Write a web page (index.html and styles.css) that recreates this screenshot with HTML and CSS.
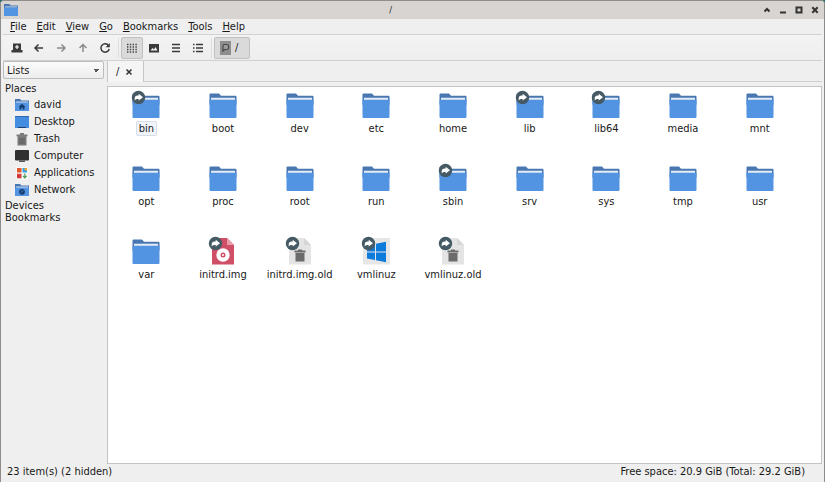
FILE: index.html
```html
<!DOCTYPE html>
<html lang="en">
<head>
<meta charset="utf-8">
<title>/</title>
<link rel="stylesheet" href="styles.css">
</head>
<body>
<svg class="defs" aria-hidden="true">
  <defs>
    <symbol id="folder" viewBox="0 0 30 30">
      <path d="M1.500 4.500q0-1 1-1h8.500l2 2.300h14.500q1 0 1 1v8h-27z" fill="#4877b1"/>
      <path d="M3 7.800h24v4H3z" fill="#e6edf5"/>
      <path d="M1.500 9.800h27v17.200q0 1-1 1h-25q-1 0-1-1z" fill="#5294e2"/>
    </symbol>
    <symbol id="link" viewBox="0 0 30 30">
      <circle cx="7.500" cy="7.500" r="6.700" fill="#455a64"/>
      <path d="M3.700 10.500V8.500Q3.700 5.600 6.700 5.600H7.700V3.800L12 7.300 7.700 10.500V9H6Q4.500 9 3.700 10.500z" fill="#fff"/>
    </symbol>
    <symbol id="disc" viewBox="0 0 30 30">
      <path d="M4 2h15l7 7v19.500H4z" fill="#cf5066"/>
      <path d="M19 2l7 7h-7z" fill="#e79aa8"/>
      <circle cx="15" cy="19" r="6.700" fill="#fff"/>
      <circle cx="15" cy="19" r="2.500" fill="#cf5066"/>
      <circle cx="15" cy="19" r="1" fill="#fff"/>
    </symbol>
    <symbol id="old" viewBox="0 0 30 30">
      <path d="M4 2h15l7 7v19.500H4z" fill="#e4e4e4"/>
      <path d="M19 2l7 7h-7z" fill="#d6d6d6"/>
      <path d="M9.500 14.500h3.500v-1h4v1h3.500v2h-11zM10.500 17h9v8.500h-9z" fill="#6b6b6b"/>
    </symbol>
    <symbol id="win" viewBox="0 0 30 30">
      <rect x="2" y="2" width="27" height="26.500" rx="1" fill="#e6e6e6"/>
      <path d="M6 9.500l8-1.500v7.500H6zM15 7.800l10-2v9.700H15zM6 16.500h8V24l-8-1.500zM15 16.500h10v9.700l-10-2z" fill="#0d7bdc"/>
    </symbol>
  </defs>
</svg>
<div class="window">
  <header class="titlebar">
    <svg class="app-icon" viewBox="0 0 14 14"><path d="M0 1h5l2 1.500h7V6H0z" fill="#4877b1"/><path d="M1 3.500h12v1H1z" fill="#dfe7f2"/><path d="M0 4.500h14V13H0z" fill="#5294e2"/></svg>
    <h1 class="title">/</h1>
    <div class="window-buttons">
      <button aria-label="Shade"><svg viewBox="0 0 8 8"><path d="M1.500 5.500L4 3l2.500 2.500"/></svg></button>
      <button aria-label="Minimize"><svg viewBox="0 0 8 8"><path d="M1 6.500h6"/></svg></button>
      <button aria-label="Maximize"><svg viewBox="0 0 8 8"><path d="M1.500 1.500h5v5h-5z"/></svg></button>
      <button aria-label="Close"><svg viewBox="0 0 8 8"><path d="M1.300 1.300l5.400 5.400M6.700 1.300L1.300 6.700"/></svg></button>
    </div>
  </header>
  <nav class="menubar">
    <button><u>F</u>ile</button><button><u>E</u>dit</button><button><u>V</u>iew</button><button><u>G</u>o</button><button><u>B</u>ookmarks</button><button><u>T</u>ools</button><button><u>H</u>elp</button>
  </nav>
  <div class="toolbar">
    <button class="tool" aria-label="New tab"><svg viewBox="0 0 12 12"><path d="M2 1.500h8V8h1.500v2.500H.5V8H2z" fill="#3a3a3a"/><path d="M6 3v4M4 5h4" stroke="#fff" stroke-width="1.200"/></svg></button>
    <button class="tool" aria-label="Back"><svg viewBox="0 0 12 12" class="line"><path d="M10 6H2.500M5.500 2.500L2 6l3.500 3.500"/></svg></button>
    <button class="tool dim" aria-label="Forward"><svg viewBox="0 0 12 12" class="line"><path d="M2 6h7.500M6.500 2.500L10 6 6.500 9.500"/></svg></button>
    <button class="tool dim" aria-label="Up"><svg viewBox="0 0 12 12" class="line"><path d="M6 10V2.500M2.500 6L6 2.500 9.500 6"/></svg></button>
    <button class="tool" aria-label="Reload"><svg viewBox="0 0 12 12" class="line"><path d="M9.600 3.600A4.200 4.200 0 1 0 10.200 7"/><path d="M10.800 1v4.200H6.600z" fill="#3a3a3a" stroke="none"/></svg></button>
    <span class="divider"></span>
    <button class="tool active" aria-label="Icon view" aria-pressed="true"><svg viewBox="0 0 12 12"><path d="M1 2.500h10M1 5h10M1 7.500h10M1 10h10" stroke="#444" stroke-width="1.300" stroke-dasharray="1.400 1.400"/></svg></button>
    <button class="tool" aria-label="Thumbnail view"><svg viewBox="0 0 12 12"><path d="M1 2h10v8.500H1z" fill="#3a3a3a"/><path d="M2.500 8.500l2-2.500 1.500 1.500 1.500-2.500 2 3.500z" fill="#f4f4f4"/></svg></button>
    <button class="tool" aria-label="Compact view"><svg viewBox="0 0 12 12" class="line"><path d="M2 2.500h8M2 6h8M2 9.500h8"/></svg></button>
    <button class="tool" aria-label="Detailed list view"><svg viewBox="0 0 12 12" class="line"><path d="M1 2.500h1.500M4 2.500h7M1 6h1.500M4 6h7M1 9.500h1.500M4 9.500h7"/></svg></button>
    <span class="divider"></span>
    <button class="path"><svg viewBox="0 0 11 14"><path d="M0 0h11v14H0z" fill="#8e8e8e"/><path d="M4.300 3.500h2.400q1.800 0 1.800 1.800v1.400q0 1.800-1.800 1.800H4.800L3 10V5q0-1.500 1.300-1.500z" fill="#9c9c9c" stroke="#484848" stroke-width="1.200"/></svg><span>/</span></button>
  </div>
  <div class="content">
    <aside class="sidebar">
      <select aria-label="Side pane mode"><option>Lists</option></select>
      <h2>Places</h2>
      <ul>
        <li><svg viewBox="0 0 14 14"><path d="M0 1h5l1.500 1.500H14V5H0z" fill="#4877b1"/><path d="M1 3.500h12V5H1z" fill="#cddff4"/><path d="M0 4.500h14V13H0z" fill="#5294e2"/><path d="M3.800 8.500L7 5.800l3.200 2.700-.7.700V11.500H7.700V9.800H6.300v1.700H4.500V9.200z" fill="#173e70"/></svg><a href="#david">david</a></li>
        <li><svg viewBox="0 0 14 14"><path d="M0 1h14v12H0z" fill="#448de0"/><path d="M0 1h14v1H0z" fill="#3168ab"/><path d="M3 12h8v1H3z" fill="#1d3f69"/></svg><a href="#desktop">Desktop</a></li>
        <li><svg viewBox="0 0 14 14"><path d="M1.500 2.500H5V1h4v1.500h3.500v1.700h-11zM2.500 4.200h9V13.500h-9z" fill="#7b7b7b"/><path d="M5 6v6M7 6v6M9 6v6" stroke="#5a5a5a"/></svg><a href="#trash">Trash</a></li>
        <li><svg viewBox="0 0 14 14"><rect y="1" width="14" height="10.500" rx="1" fill="#303030"/><path d="M4 11.500h6V13H4z" fill="#555"/></svg><a href="#computer">Computer</a></li>
        <li><svg viewBox="0 0 14 14"><rect x="1" y="1" width="12" height="12.500" fill="#f7f7f7"/><path d="M2 2h4.500v4.500H2z" fill="#e2582d"/><path d="M7.500 2H12v4.500H7.500z" fill="#2f9fe8"/><path d="M9.500 2H12v2.500H9.500z" fill="#eda42b"/><path d="M2 7.800h4.500v4.500H2z" fill="#d53a3a"/><path d="M9.800 7.500v4M8 9.800l1.800 2 1.800-2" fill="none" stroke="#4a9d58" stroke-width="1.200"/></svg><a href="#applications">Applications</a></li>
        <li><svg viewBox="0 0 14 14"><path d="M0 1h5l1.500 1.500H14V5H0z" fill="#4877b1"/><path d="M1 3.500h12V5H1z" fill="#cddff4"/><path d="M0 4.500h14V13H0z" fill="#5294e2"/><circle cx="7" cy="8.800" r="2.900" fill="#173e70"/><path d="M6 9.500l2-2" stroke="#5294e2"/></svg><a href="#network">Network</a></li>
      </ul>
      <h2>Devices</h2>
      <h2>Bookmarks</h2>
    </aside>
    <main class="main">
      <div class="tabs"><div class="tab"><span>/</span><button aria-label="Close tab"><svg viewBox="0 0 8 8"><path d="M1.500 1.500l5 5M6.500 1.500l-5 5"/></svg></button></div></div>
      <ul class="files">
        <li><svg><use href="#folder"/><use href="#link"/></svg><span class="focused">bin</span></li>
        <li><svg><use href="#folder"/></svg><span>boot</span></li>
        <li><svg><use href="#folder"/></svg><span>dev</span></li>
        <li><svg><use href="#folder"/></svg><span>etc</span></li>
        <li><svg><use href="#folder"/></svg><span>home</span></li>
        <li><svg><use href="#folder"/><use href="#link"/></svg><span>lib</span></li>
        <li><svg><use href="#folder"/><use href="#link"/></svg><span>lib64</span></li>
        <li><svg><use href="#folder"/></svg><span>media</span></li>
        <li><svg><use href="#folder"/></svg><span>mnt</span></li>
        <li><svg><use href="#folder"/></svg><span>opt</span></li>
        <li><svg><use href="#folder"/></svg><span>proc</span></li>
        <li><svg><use href="#folder"/></svg><span>root</span></li>
        <li><svg><use href="#folder"/></svg><span>run</span></li>
        <li><svg><use href="#folder"/><use href="#link"/></svg><span>sbin</span></li>
        <li><svg><use href="#folder"/></svg><span>srv</span></li>
        <li><svg><use href="#folder"/></svg><span>sys</span></li>
        <li><svg><use href="#folder"/></svg><span>tmp</span></li>
        <li><svg><use href="#folder"/></svg><span>usr</span></li>
        <li><svg><use href="#folder"/></svg><span>var</span></li>
        <li><svg><use href="#disc"/><use href="#link"/></svg><span>initrd.img</span></li>
        <li><svg><use href="#old"/><use href="#link"/></svg><span>initrd.img.old</span></li>
        <li><svg><use href="#win"/><use href="#link"/></svg><span>vmlinuz</span></li>
        <li><svg><use href="#old"/><use href="#link"/></svg><span>vmlinuz.old</span></li>
      </ul>
    </main>
  </div>
  <footer class="statusbar"><span>23 item(s) (2 hidden)</span><span>Free space: 20.9 GiB (Total: 29.2 GiB)</span></footer>
</div>
</body>
</html>
```
FILE: styles.css
```css
* { box-sizing: border-box; }
body {
  margin: 0;
  background: #176b70;
  color: #181818;
  font: 11px/15px "DejaVu Sans Condensed", "DejaVu Sans", sans-serif;
}
button { border: 0; padding: 0; background: none; color: inherit; font: inherit; }
ul { list-style: none; margin: 0; padding: 0; }
a { color: inherit; text-decoration: none; }
svg { display: block; flex: none; }
.defs { position: absolute; width: 0; height: 0; }

.window {
  display: flex;
  flex-direction: column;
  min-height: 100vh;
  border: 1px solid #8f8c8b;
  border-bottom: 0;
  border-radius: 4px 4px 0 0;
  background: #efefef;
  overflow: hidden;
}
.titlebar {
  display: flex;
  align-items: center;
  height: 18px;
  padding: 0 5px 0 3px;
  background: #d8d4d1;
}
.app-icon { width: 14px; height: 14px; }
.title { flex: 1; margin: 0; font-size: 9px; font-weight: 400; text-align: center; }
.window-buttons { display: flex; gap: 8px; }
.window-buttons svg { width: 8px; height: 8px; fill: none; stroke: #333; stroke-width: 2; }

.menubar {
  display: flex;
  gap: 10px;
  height: 16px;
  margin: 0 2px;
  padding-left: 7px;
  border-bottom: 1px solid #d2d2d2;
}
.menubar u { text-underline-offset: 1px; }

.toolbar {
  display: flex;
  align-items: center;
  height: 26px;
  margin: 0 2px;
  padding-left: 3px;
  border-bottom: 1px solid #d0d0d0;
  background: linear-gradient(#f3f3f3, #eee);
}
.tool { display: grid; place-items: center; width: 22px; height: 22px; border-radius: 2px; }
.tool svg { width: 12px; height: 12px; }
.line { fill: none; stroke: #3a3a3a; stroke-width: 1.500; }
.dim { opacity: 0.55; }
.active, .path { border: 1px solid #c0c0c0; background: #dadada; }
.divider { width: 1px; height: 20px; margin: 0 2px; background: #dedede; }
.path {
  display: flex;
  align-items: center;
  gap: 4px;
  width: 36px;
  height: 22px;
  padding-left: 5px;
  border-radius: 2px;
}
.path svg { width: 11px; height: 14px; }

.content { display: flex; flex: 1; gap: 3px; padding: 0 2px; }
.sidebar { flex: none; width: 101px; }
.sidebar select {
  appearance: none;
  display: block;
  width: 100%;
  height: 18px;
  margin-bottom: 4px;
  padding: 0 3px;
  border: 1px solid #bdbdbd;
  border-radius: 2px;
  background:
    linear-gradient(225deg, #555 50%, transparent 50%) right 7px center / 3px 3px no-repeat,
    linear-gradient(135deg, #555 50%, transparent 50%) right 4px center / 3px 3px no-repeat,
    linear-gradient(#fbfbfb, #ededed);
  color: inherit;
  font: inherit;
}
.sidebar h2 { margin: 0; padding-left: 2px; font-size: 11px; font-weight: 400; line-height: 12px; }
.sidebar ul { padding: 1px 0 2px; }
.sidebar li { display: flex; align-items: center; gap: 5px; padding-left: 12px; line-height: 17px; }
.sidebar li svg { width: 14px; height: 14px; }

.main { display: flex; flex: 1; flex-direction: column; min-width: 0; }
.tabs { display: flex; height: 21px; border-bottom: 1px solid #cfcfcf; }
.tab {
  display: flex;
  align-items: center;
  gap: 6px;
  height: 21px;
  padding: 0 10px 0 8px;
  border: 1px solid #c6c6c6;
  border-width: 0 1px;
  background: #f5f5f5;
}
.tab svg { width: 8px; height: 8px; fill: none; stroke: #333; stroke-width: 1.500; }
.files {
  display: grid;
  flex: 1;
  grid-template-columns: repeat(9, 1fr);
  grid-auto-rows: 73px;
  margin-top: 4px;
  padding: 3px 23px 0 0;
  border: 1px solid #c3c3c3;
  background: #fff;
}
.files li { display: flex; flex-direction: column; align-items: center; white-space: nowrap; }
.files svg { width: 30px; height: 30px; margin-bottom: 1px; }
.files span { padding: 0 2px; border: 1px solid transparent; border-radius: 2px; line-height: 13px; }
.files .focused { border-color: #d5deea; background: #f1f5fa; }

.statusbar { display: flex; justify-content: space-between; height: 18px; padding: 0 19px 0 6px; }
```
